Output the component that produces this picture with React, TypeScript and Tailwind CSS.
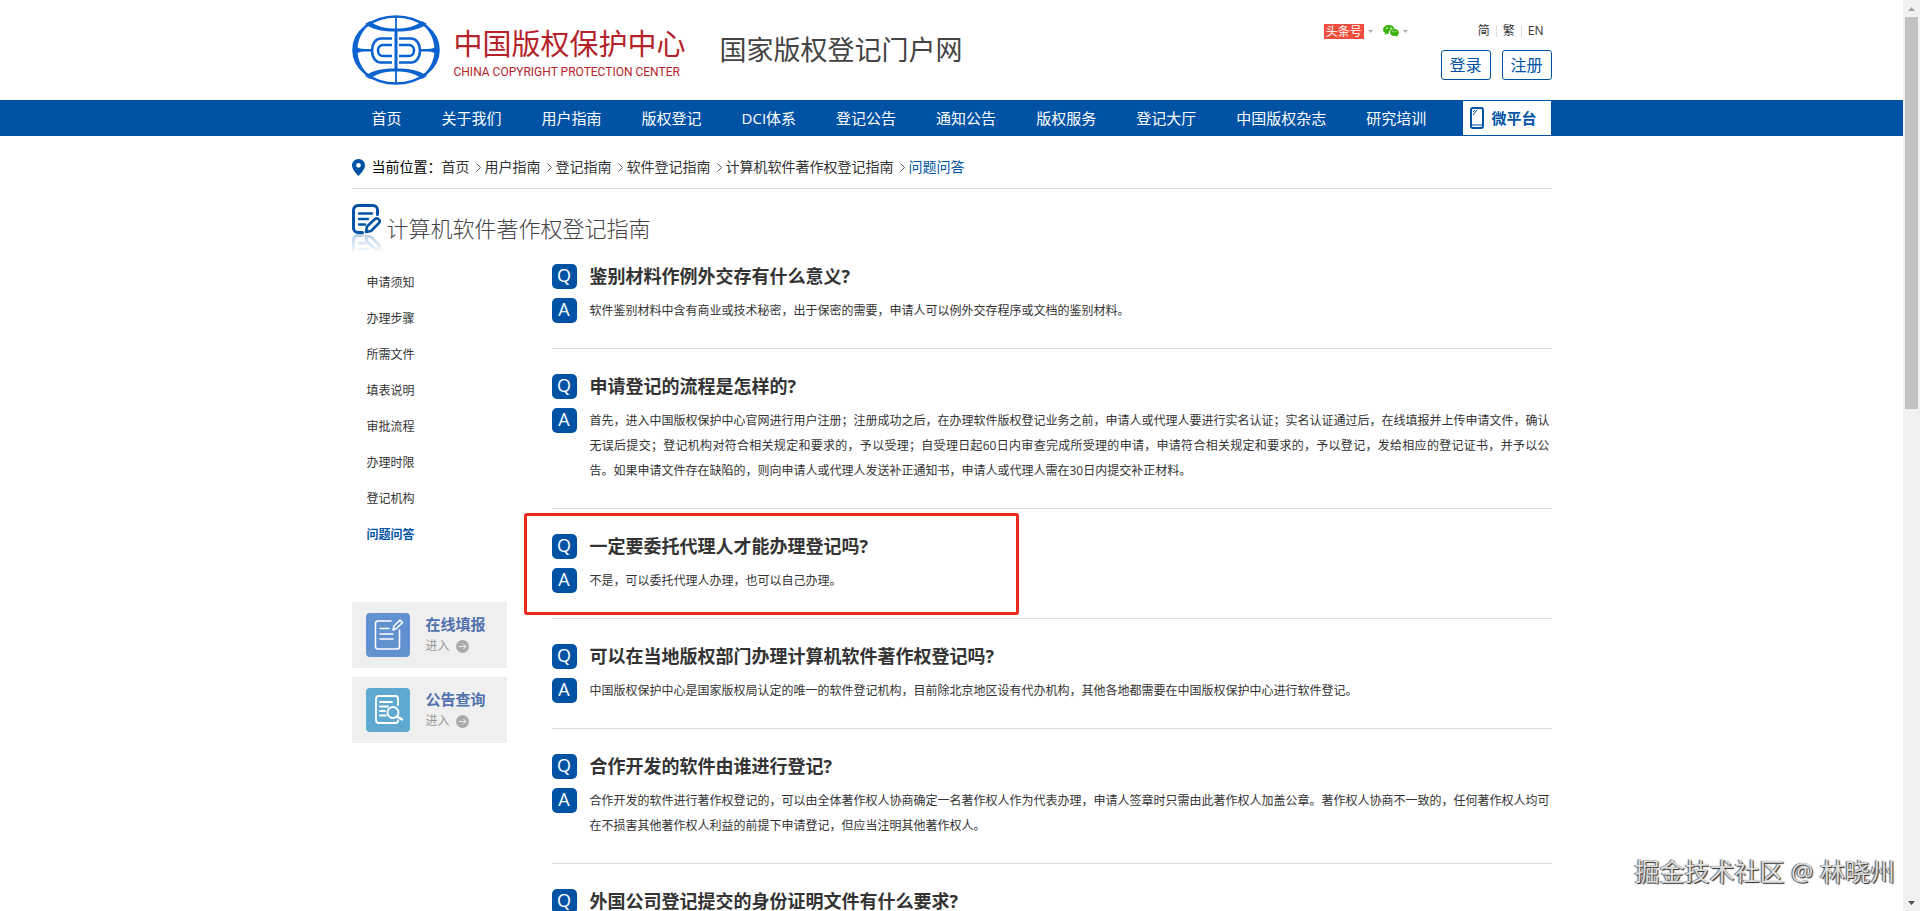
import { ReactNode } from "react"

const navItems = ["首页", "关于我们", "用户指南", "版权登记", "DCI体系", "登记公告", "通知公告", "版权服务", "登记大厅", "中国版权杂志", "研究培训"]

const crumbs = ["首页", "用户指南", "登记指南", "软件登记指南", "计算机软件著作权登记指南", "问题问答"]

const guideItems = ["申请须知", "办理步骤", "所需文件", "填表说明", "审批流程", "办理时限", "登记机构", "问题问答"]

interface Faq {
    q: string
    a?: string
    marked?: boolean
}

const faqs: Faq[] = [
    { q: "鉴别材料作例外交存有什么意义?", a: "软件鉴别材料中含有商业或技术秘密，出于保密的需要，申请人可以例外交存程序或文档的鉴别材料。" },
    { q: "申请登记的流程是怎样的?", a: "首先，进入中国版权保护中心官网进行用户注册；注册成功之后，在办理软件版权登记业务之前，申请人或代理人要进行实名认证；实名认证通过后，在线填报并上传申请文件，确认无误后提交；登记机构对符合相关规定和要求的，予以受理；自受理日起60日内审查完成所受理的申请，申请符合相关规定和要求的，予以登记，发给相应的登记证书，并予以公告。如果申请文件存在缺陷的，则向申请人或代理人发送补正通知书，申请人或代理人需在30日内提交补正材料。" },
    { q: "一定要委托代理人才能办理登记吗?", a: "不是，可以委托代理人办理，也可以自己办理。", marked: true },
    { q: "可以在当地版权部门办理计算机软件著作权登记吗?", a: "中国版权保护中心是国家版权局认定的唯一的软件登记机构，目前除北京地区设有代办机构，其他各地都需要在中国版权保护中心进行软件登记。" },
    { q: "合作开发的软件由谁进行登记?", a: "合作开发的软件进行著作权登记的，可以由全体著作权人协商确定一名著作权人作为代表办理，申请人签章时只需由此著作权人加盖公章。著作权人协商不一致的，任何著作权人均可在不损害其他著作权人利益的前提下申请登记，但应当注明其他著作权人。" },
    { q: "外国公司登记提交的身份证明文件有什么要求?" },
]

const Logo = () => (
    <svg viewBox="0 0 88 70" className="h-[70px] w-[88px]" fill="none" stroke="#0a63d1" strokeWidth="2.6">
        <ellipse cx="44" cy="35" rx="42.5" ry="33.5" strokeWidth="2.6" />
        <path d="M1 35a43 34 0 0 1 21-29.500C10 14 5.500 25 5.500 35S10 56 22 64.500A43 34 0 0 1 1 35zM87 35A43 34 0 0 0 66 5.500C78 14 82.500 25 82.500 35S78 56 66 64.500A43 34 0 0 0 87 35z" fill="#0a63d1" stroke="none" />
        <path d="M13 9l5-3c7 6 16 7.500 26 7.500S63 12 70 6l5 3c-8 6-18 7.500-31 7.500S21 15 13 9zM13 61l5 3c7-6 16-7.500 26-7.500S63 58 70 64l5-3c-8-6-18-7.500-31-7.500S21 55 13 61z" fill="#0a63d1" stroke="none" />
        <path d="M44 2v13M44 54v14" strokeWidth="1.800" />
        <path d="M44 15v39" strokeWidth="3" />
        <path d="M4 32q4 2 8 2h8v2.500h-8q-4 0-8 2zM84 32q-4 2-8 2h-8v2.500h8q4 0 8 2z" fill="#0a63d1" stroke="none" />
        <path d="M40 23.500H29C23.500 23.500 20 29 20 35.500S23.500 47.500 29 47.500h11M47 23.500h12c5.500 0 9 5.500 9 12s-3.500 12-9 12H47" />
        <path d="M40 30h-9c-3 0-5 2.500-5 5.500s2 5.500 5 5.500h9M47 30h10c3 0 5 2.500 5 5.500s-2 5.500-5 5.500H47" />
    </svg>
)

const DocPen = () => (
    <svg viewBox="0 0 29 30" className="h-[30px] w-[29px]" fill="none" stroke="#0053a4" strokeWidth="3" strokeLinecap="round" strokeLinejoin="round">
        <path d="M25.500 10.500V6A4.500 4.500 0 0 0 21 1.500H6A4.500 4.500 0 0 0 1.500 6v18A4.500 4.500 0 0 0 6 28.500h4.500" />
        <path d="M7 9.500h13M7 15h9M7 20.500h6" strokeWidth="2.400" />
        <path d="M14 28l1-5.500 8-7.500q2-1.500 3.800.3t.2 3.700L19 27z" strokeWidth="2.600" />
    </svg>
)

const FormIcon = () => (
    <svg viewBox="0 0 44 44" className="size-11" fill="none" stroke="#fff" strokeWidth="1.500" strokeLinecap="round" strokeLinejoin="round">
        <path d="M25 8H12a2.500 2.500 0 0 0-2.500 2.500v23A2.500 2.500 0 0 0 12 36h19a2.500 2.500 0 0 0 2.500-2.500V17M14 15.500h9M14 21h13M14 26h13" />
        <path d="M27 17l1-4 6-6 2.500 2.500-6 6z" />
    </svg>
)

const SearchDocIcon = () => (
    <svg viewBox="0 0 44 44" className="size-11" fill="none" stroke="#fff" strokeWidth="1.800" strokeLinecap="round" strokeLinejoin="round">
        <path d="M32 17v-6.500A2.500 2.500 0 0 0 29.500 8H13a3 3 0 0 0-3 3v21a3 3 0 0 0 3 3h16.500a2.500 2.500 0 0 0 2.500-2.500M14 14h12M14 18.500h8M14 23h5M14 27.500h6" />
        <circle cx="27" cy="24.500" r="5.500" />
        <path d="M31 28.500l5 3" strokeWidth="2.400" />
    </svg>
)

const WechatIcon = () => (
    <svg viewBox="0 0 16 12" className="h-3 w-4" fill="#3bb30b">
        <path d="M6 0C2.700 0 0 2 0 4.600c0 1.400.8 2.700 2.100 3.500L1.500 10l2.300-1.200c.6.2 1.200.2 1.900.2C5.300 6 7.800 3.700 11.500 3.700 11 1.500 8.800 0 6 0z" />
        <path d="M16 7.600c0-2-2-3.500-4.500-3.500S7 5.600 7 7.600s2 3.500 4.500 3.500c.5 0 1-.1 1.500-.2l1.700.9-.4-1.500c1-.6 1.700-1.600 1.700-2.700z" />
        <g fill="#fff"><circle cx="4" cy="3.300" r=".8" /><circle cx="8" cy="3.300" r=".8" /><circle cx="10" cy="6.600" r=".6" /><circle cx="13" cy="6.600" r=".6" /></g>
    </svg>
)

const Caret = () => (
    <svg viewBox="0 0 5 3" className="h-[3px] w-[5px]" fill="#aaa"><path d="M0 0h5L2.500 3z" /></svg>
)

const Badge = ({ children }: { children: ReactNode }) => (
    <span className="flex h-[25px] w-[25px] shrink-0 justify-center rounded-[5px] bg-[#0053a4] text-lg leading-[23px] text-white">{children}</span>
)

const SideCard = ({ title, tint, children }: { title: string, tint: string, children: ReactNode }) => (
    <a href="#" className="flex h-[66px] items-center gap-4 bg-[#efefef] pl-[14px]">
        <span className={`rounded ${tint}`}>{children}</span>
        <span>
            <span className="block text-[15px] leading-[22px] font-bold text-[#5273ae]">{title}</span>
            <span className="flex items-center gap-1.5 text-xs leading-[22px] text-[#999]">
                进入
                <svg viewBox="0 0 13 13" className="size-[13px]"><circle cx="6.500" cy="6.500" r="6.500" fill="#aaa" /><path d="M3 6.500h7M7 3.500l3 3-3 3" stroke="#eee" fill="none" /></svg>
            </span>
        </span>
    </a>
)

const Header = () => (
    <header className="mx-auto flex h-[100px] w-full max-w-[1200px] justify-between">
        <div className="flex items-center">
            <Logo />
            <div className="ml-[14px] pt-2 text-[#b5232a]">
                <p className="text-[29px] leading-9">中国版权保护中心</p>
                <p className="font-['Roboto','Liberation_Sans',sans-serif] text-xs leading-5">CHINA COPYRIGHT PROTECTION CENTER</p>
            </div>
            <p className="ml-[34px] text-[27px] leading-9 text-[#444]">国家版权登记门户网</p>
        </div>
        <div className="flex flex-col items-end gap-[9px] pt-[21px]">
            <div className="flex items-center text-xs leading-5 text-[#333]">
                <a href="#" className="bg-[#f04e3c] px-0.5 leading-[15px] text-white">头条号</a>
                <span className="mr-2.5 ml-1"><Caret /></span>
                <WechatIcon />
                <span className="mr-[70px] ml-1"><Caret /></span>
                <a href="#">简</a>
                <span className="mx-1.5 h-3 w-px bg-[#ddd]"></span>
                <a href="#">繁</a>
                <span className="mx-1.5 h-3 w-px bg-[#ddd]"></span>
                <a href="#" className="mr-2">EN</a>
            </div>
            <div className="flex gap-[11px]">
                <button type="button" className="h-[30px] w-[50px] rounded-[3px] border border-[#0053a4] text-base leading-7 text-[#0053a4]">登录</button>
                <button type="button" className="h-[30px] w-[50px] rounded-[3px] border border-[#0053a4] text-base leading-7 text-[#0053a4]">注册</button>
            </div>
        </div>
    </header>
)

const Nav = () => (
    <nav className="bg-[#0053a4]">
        <div className="mx-auto flex h-9 max-w-[1200px] items-center text-[15px] text-white">
            {navItems.map(item => <a key={item} href="#" className="px-5 leading-9">{item}</a>)}
            <a href="#" className="mr-px ml-auto flex h-[34px] w-[88px] items-center gap-2 bg-white pl-[7px] font-bold text-[#0053a4]">
                <svg viewBox="0 0 14 22" className="h-[22px] w-[14px]" fill="none" stroke="#0053a4">
                    <rect x="1" y="1" width="12" height="20" rx="2" strokeWidth="2" />
                    <path d="M1 18h12M3 8l4-5M3 5l2-2" />
                </svg>
                微平台
            </a>
        </div>
    </nav>
)

const Breadcrumb = () => (
    <div className="flex h-[53px] items-center border-b border-[#ddd] pt-[10px] text-sm text-[#333]">
        <svg viewBox="0 0 13 17" className="mr-[7px] h-[17px] w-[13px]" fill="#0053a4">
            <path fillRule="evenodd" d="M6.500 0A6.400 6.400 0 0 0 0 6.500C0 11 6.500 17 6.500 17S13 11 13 6.500A6.400 6.400 0 0 0 6.500 0zm0 4a2.300 2.300 0 1 1 0 4.700 2.300 2.300 0 0 1 0-4.700z" />
        </svg>
        <span className="text-black">当前位置：</span>
        {crumbs.map((crumb, i) => (
            <span key={crumb} className="flex items-center">
                {i > 0 && <svg viewBox="0 0 15 9" className="h-[9px] w-[15px]" fill="none" stroke="#555"><path d="M6.500.5l4 4-4 4" /></svg>}
                <a href="#" className={i === crumbs.length - 1 ? "text-[#0053a4]" : ""}>{crumb}</a>
            </span>
        ))}
    </div>
)

const App = () => {
    return (
        <div className="flex h-screen overflow-hidden bg-white font-['Open_Sans','Noto_Sans_CJK_SC',sans-serif]">
            <div className="min-w-0 flex-1 overflow-hidden">
                <Header />
                <Nav />
                <main className="mx-auto max-w-[1200px]">
                    <Breadcrumb />
                    <div className="flex h-[75px] gap-[6px] pt-[15px]">
                        <div className="w-[29px]">
                            <DocPen />
                            <div className="h-5 -scale-y-100 overflow-hidden opacity-30 mask-t-from-0% mask-t-to-100%">
                                <div className="-mt-[10px]"><DocPen /></div>
                            </div>
                        </div>
                        <h1 className="pt-1.5 text-[22px] leading-9 font-light text-[#444]">计算机软件著作权登记指南</h1>
                    </div>
                    <div className="flex gap-[45px]">
                        <aside className="w-[155px] shrink-0 pt-px">
                            <ul className="mb-[49px] pl-[15px] text-xs leading-9 text-[#333]">
                                {guideItems.map((item, i) => (
                                    <li key={item}><a href="#" className={i === 7 ? "font-bold text-[#0053a4]" : ""}>{item}</a></li>
                                ))}
                            </ul>
                            <div className="flex flex-col gap-[9px]">
                                <SideCard title="在线填报" tint="bg-[#6191cf]"><FormIcon /></SideCard>
                                <SideCard title="公告查询" tint="bg-[#5fa9d0]"><SearchDocIcon /></SideCard>
                            </div>
                        </aside>
                        <section className="min-w-0 flex-1">
                            {faqs.map((faq, i) => (
                                <article key={faq.q} className={`relative border-b border-[#ddd] pb-[25px] ${i > 0 ? "pt-[25px]" : ""}`}>
                                    <div className="flex gap-[13px]">
                                        <Badge>Q</Badge>
                                        <h2 className="text-lg leading-[25px] font-bold text-[#333]">{faq.q}</h2>
                                    </div>
                                    {faq.a && (
                                        <div className="mt-[9px] flex gap-[13px] pr-0.5">
                                            <Badge>A</Badge>
                                            <p className="flex-1 text-justify text-xs leading-[25px] text-[#333] [text-spacing-trim:space-all]">{faq.a}</p>
                                        </div>
                                    )}
                                    {faq.marked && <div className="absolute top-1 -left-7 h-[102px] w-[495px] rounded-[3px] border-3 border-[#e8291f]"></div>}
                                </article>
                            ))}
                        </section>
                    </div>
                </main>
            </div>
            <div className="flex w-[17px] shrink-0 flex-col items-center justify-between bg-[#f1f1f1]">
                <div className="flex flex-col items-center">
                    <svg viewBox="0 0 17 17" className="size-[17px]" fill="#a3a3a3"><path d="M5 11h7L8.500 7z" /></svg>
                    <div className="h-[392px] w-[13px] bg-[#c1c1c1]"></div>
                </div>
                <svg viewBox="0 0 17 17" className="size-[17px]" fill="#505050"><path d="M5 7h7l-3.500 4z" /></svg>
            </div>
            <p className="absolute right-[25px] bottom-[22px] text-[25px] leading-9 text-[#ddd] [text-shadow:-1px_0_1px_#555,1px_1px_1px_#222]">掘金技术社区 @ 林晓州</p>
        </div>
    )
}

export default App
